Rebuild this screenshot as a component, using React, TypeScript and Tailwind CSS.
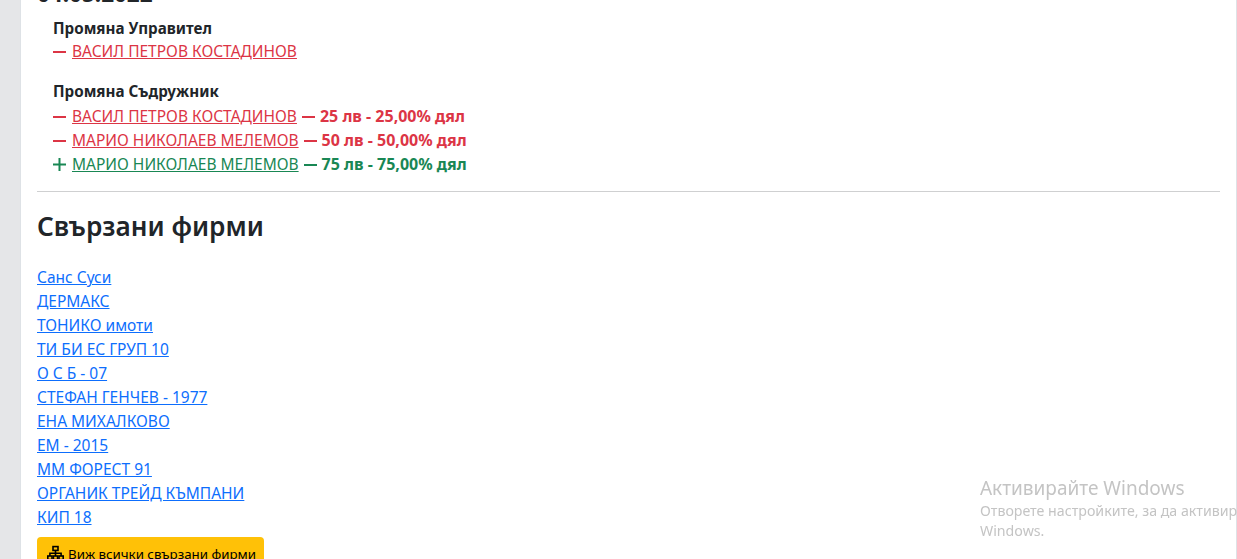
const font = { fontFamily: '"Noto Sans", "Open Sans", sans-serif' };

const links = [
  'Санс Суси',
  'ДЕРМАКС',
  'ТОНИКО имоти',
  'ТИ БИ ЕС ГРУП 10',
  'О С Б - 07',
  'СТЕФАН ГЕНЧЕВ - 1977',
  'ЕНА МИХАЛКОВО',
  'ЕМ - 2015',
  'ММ ФОРЕСТ 91',
  'ОРГАНИК ТРЕЙД КЪМПАНИ',
  'КИП 18',
];

function Minus({ className }: { className: string }) {
  return <span className={`inline-block w-[13px] h-[2px] align-[4px] ${className}`} />;
}

function Plus() {
  return (
    <svg width="13" height="13" viewBox="0 0 13 13" className="inline-block align-[-1px] text-[#198754]">
      <path d="M6.5 0v13M0 6.5h13" stroke="currentColor" strokeWidth="2" />
    </svg>
  );
}

function Row({ sign, name, share, tone }: { sign: 'plus' | 'minus'; name: string; share?: string; tone: 'red' | 'green' }) {
  const color = tone === 'red' ? 'text-[#dc3545]' : 'text-[#198754]';
  const bg = tone === 'red' ? 'bg-[#dc3545]' : 'bg-[#198754]';
  return (
    <div className={`h-6 leading-[22px] whitespace-nowrap text-[15.5px] ${color}`}>
      {sign === 'plus' ? <Plus /> : <Minus className={bg} />}
      <a className="underline ml-[6px]">{name}</a>
      {share && (
        <>
          <Minus className={`${bg} ml-[5px]`} />
          <b className="ml-[5px] font-bold text-base">{share}</b>
        </>
      )}
    </div>
  );
}

function NetworkIcon() {
  return (
    <svg width="17" height="16" viewBox="0 0 17 16" fill="none" stroke="currentColor" strokeWidth="1.6" className="shrink-0">
      <rect x="6" y="1.6" width="5" height="3.8" />
      <rect x="0.8" y="11" width="4.2" height="3.6" />
      <rect x="6.4" y="11" width="4.2" height="3.6" />
      <rect x="12" y="11" width="4.2" height="3.6" />
      <path d="M8.5 5.4V11M2.9 11V8.2h11.2V11" />
    </svg>
  );
}

export default function App() {
  return (
    <div className="h-[559px] overflow-hidden bg-[#e5e6e8] pl-5 text-[#212529] text-base" style={font}>
      <div className="h-full bg-white border-l border-r border-[#dee2e6] pl-4 pr-4 overflow-hidden">
        <div className="-mt-[21px] text-[22.5px] font-bold leading-[29px] h-[29px]">04.05.2022</div>
        <div className="pl-4 mt-[8px]">
          <div className="font-bold h-6 leading-6 text-[15.2px]">Промяна Управител</div>
          <Row sign="minus" name="ВАСИЛ ПЕТРОВ КОСТАДИНОВ" tone="red" />
          <div className="font-bold h-6 leading-[23px] mt-4 text-[15.2px]">Промяна Съдружник</div>
          <Row sign="minus" name="ВАСИЛ ПЕТРОВ КОСТАДИНОВ" share="25 лв - 25,00% дял" tone="red" />
          <Row sign="minus" name="МАРИО НИКОЛАЕВ МЕЛЕМОВ" share="50 лв - 50,00% дял" tone="red" />
          <Row sign="plus" name="МАРИО НИКОЛАЕВ МЕЛЕМОВ" share="75 лв - 75,00% дял" tone="green" />
        </div>
        <hr className="border-t border-[#cfd0d1] mt-[15px]" />
        <h2 className="text-[26.2px] font-semibold leading-[31px] mt-[19px] mb-[23px]">Свързани фирми</h2>
        <div>
          {links.map((l) => (
            <div key={l} className="h-6 leading-6 text-[15.5px]">
              <a className="underline text-[#0d6efd]">{l}</a>
            </div>
          ))}
        </div>
        <button className="mt-[8px] h-[38px] pl-[10px] pr-[8px] rounded bg-[#ffc107] text-black text-[13.3px] flex items-start pt-[8px] gap-1 whitespace-nowrap">
          <NetworkIcon />
          Виж всички свързани фирми
        </button>
      </div>
      <div className="fixed left-[980px] top-[475px] w-[257px] overflow-hidden whitespace-nowrap text-[#c4c4c4]">
        <div className="text-[19px] leading-[27px]">Активирайте Windows</div>
        <div className="text-[14.2px] leading-[20px] mt-[-1px]">Отворете настройките, за да активирате</div>
        <div className="text-[14.2px] leading-[20px]">Windows.</div>
      </div>
    </div>
  );
}
